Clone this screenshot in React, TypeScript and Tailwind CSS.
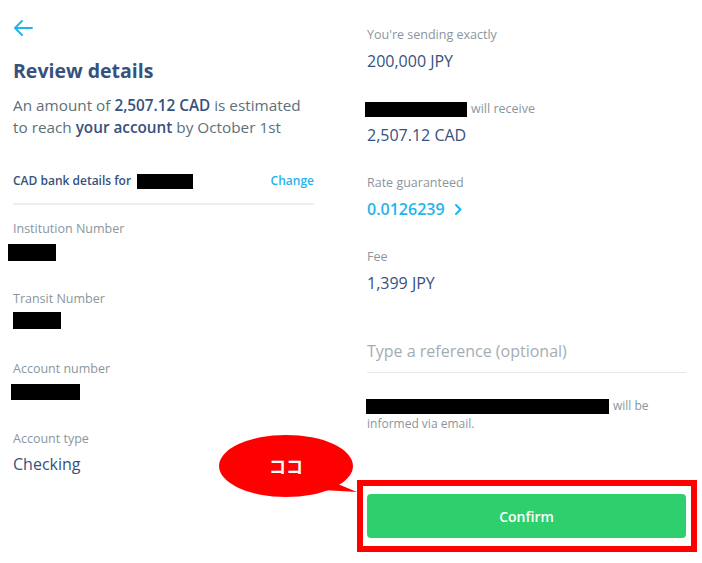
import React from 'react';

const font = { fontFamily: '"Open Sans", "Noto Sans", "Noto Sans CJK JP", sans-serif' };

function Redacted({ w, h, x = 0 }: { w: number; h: number; x?: number }) {
  return <div className="bg-black" style={{ width: w, height: h, marginLeft: x }} />;
}

function LeftField({ label, children, top }: { label: string; children: React.ReactNode; top: number }) {
  return (
    <div className="h-[70px]">
      <div className="text-[12.5px] leading-[16px] text-[#8a969e]">{label}</div>
      <div style={{ marginTop: top }}>{children}</div>
    </div>
  );
}

function RightField({ label, children }: { label: React.ReactNode; children: React.ReactNode }) {
  return (
    <div className="h-[74px]">
      <div className="flex items-center h-[16px] text-[12.5px] leading-[16px] text-[#8a969e]">{label}</div>
      <div className="mt-[7px] text-[16px] leading-[22px] text-[#37517e]">{children}</div>
    </div>
  );
}

export default function App() {
  return (
    <div className="relative w-[702px] h-[563px] bg-white overflow-hidden" style={font}>
      <div className="flex">
        {/* left column */}
        <div className="w-[301px] ml-[13px] flex flex-col">
          <div className="mt-[19px] h-[18px]">
            <svg width="22" height="18" viewBox="0 0 22 18" fill="none" stroke="#1fb4ee" strokeWidth="2" strokeLinecap="round" strokeLinejoin="round">
              <path d="M2 9h17M9 2L2 9l7 7" />
            </svg>
          </div>
          <h1 className="mt-[20px] text-[19.5px] leading-[28px] font-bold text-[#37517e]">Review details</h1>
          <p className="mt-[9px] text-[15.3px] leading-[22px] text-[#5d7079] whitespace-nowrap">
            An amount of <span className="font-semibold text-[#37517e]">2,507.12 CAD</span> is estimated
            <br />
            to reach <span className="font-semibold text-[#37517e]">your account</span> by October 1st
          </p>
          <div className="mt-[34px] flex items-center h-[18px]">
            <span className="text-[12px] font-semibold text-[#37517e]">CAD bank details for</span>
            <div className="ml-[6px] w-[56px] h-[15px] bg-black" />
            <span className="ml-auto text-[12px] font-semibold text-[#1fb4ee]">Change</span>
          </div>
          <div className="mt-[13px] h-[2px] bg-[#eceff1]" />
          <div className="mt-[16px] flex flex-col">
            <LeftField label="Institution Number" top={7}>
              <Redacted w={48} h={17} x={-5} />
            </LeftField>
            <LeftField label="Transit Number" top={5}>
              <Redacted w={48} h={17} />
            </LeftField>
            <LeftField label="Account number" top={7}>
              <Redacted w={69} h={16} x={-2} />
            </LeftField>
            <LeftField label="Account type" top={6}>
              <div className="text-[16px] leading-[22px] text-[#37517e]">Checking</div>
            </LeftField>
          </div>
        </div>

        {/* right column */}
        <div className="w-[319px] ml-[53px] flex flex-col pt-[27px]">
          <RightField label="You're sending exactly">200,000 JPY</RightField>
          <RightField
            label={
              <>
                <div className="w-[102px] h-[15px] bg-black -ml-[2px]" />
                <span className="ml-[4px]">will receive</span>
              </>
            }
          >
            2,507.12 CAD
          </RightField>
          <RightField label="Rate guaranteed">
            <span className="flex items-center gap-[9px] text-[#1fb4ee] font-semibold">
              0.0126239
              <svg width="8" height="13" viewBox="0 0 8 13" fill="none" stroke="#1fb4ee" strokeWidth="2" strokeLinecap="round" strokeLinejoin="round">
                <path d="M2 2l4.5 4.5L2 11" />
              </svg>
            </span>
          </RightField>
          <RightField label="Fee">1,399 JPY</RightField>
          <div className="mt-[16px] pb-[9px] border-b border-[#e4e8eb] text-[16px] leading-[24px] text-[#a4adb3]">
            Type a reference (optional)
          </div>
          <div className="mt-[24px] text-[12px] leading-[18px] text-[#8a969e]">
            <div className="flex items-center">
              <div className="w-[243px] h-[15px] bg-black -ml-[1px]" />
              <span className="ml-[4px]">will be</span>
            </div>
            <div>informed via email.</div>
          </div>
          <div className="relative mt-[61px]">
            <button className="w-full h-[44px] rounded-[4px] bg-[#2ed06e] text-white text-[14px] font-semibold">Confirm</button>
            <div className="absolute -left-[10px] -right-[11px] -top-[14px] -bottom-[14px] border-[6px] border-[#ff0000] pointer-events-none" />
          </div>
        </div>
      </div>

      {/* speech bubble annotation */}
      <div className="absolute left-[215px] top-[432px] w-[145px] h-[68px]">
        <svg width="145" height="68" viewBox="0 0 145 68" className="absolute inset-0">
          <ellipse cx="71" cy="34" rx="67" ry="31" fill="#ff0000" />
          <path d="M118 50 L142 60 L108 58 Z" fill="#ff0000" />
        </svg>
        <div
          className="absolute left-[4px] w-[134px] top-[22px] text-center text-white font-bold text-[17px] leading-[24px]"
          style={{ fontFamily: '"Noto Sans CJK JP", sans-serif' }}
        >
          ココ
        </div>
      </div>
    </div>
  );
}
